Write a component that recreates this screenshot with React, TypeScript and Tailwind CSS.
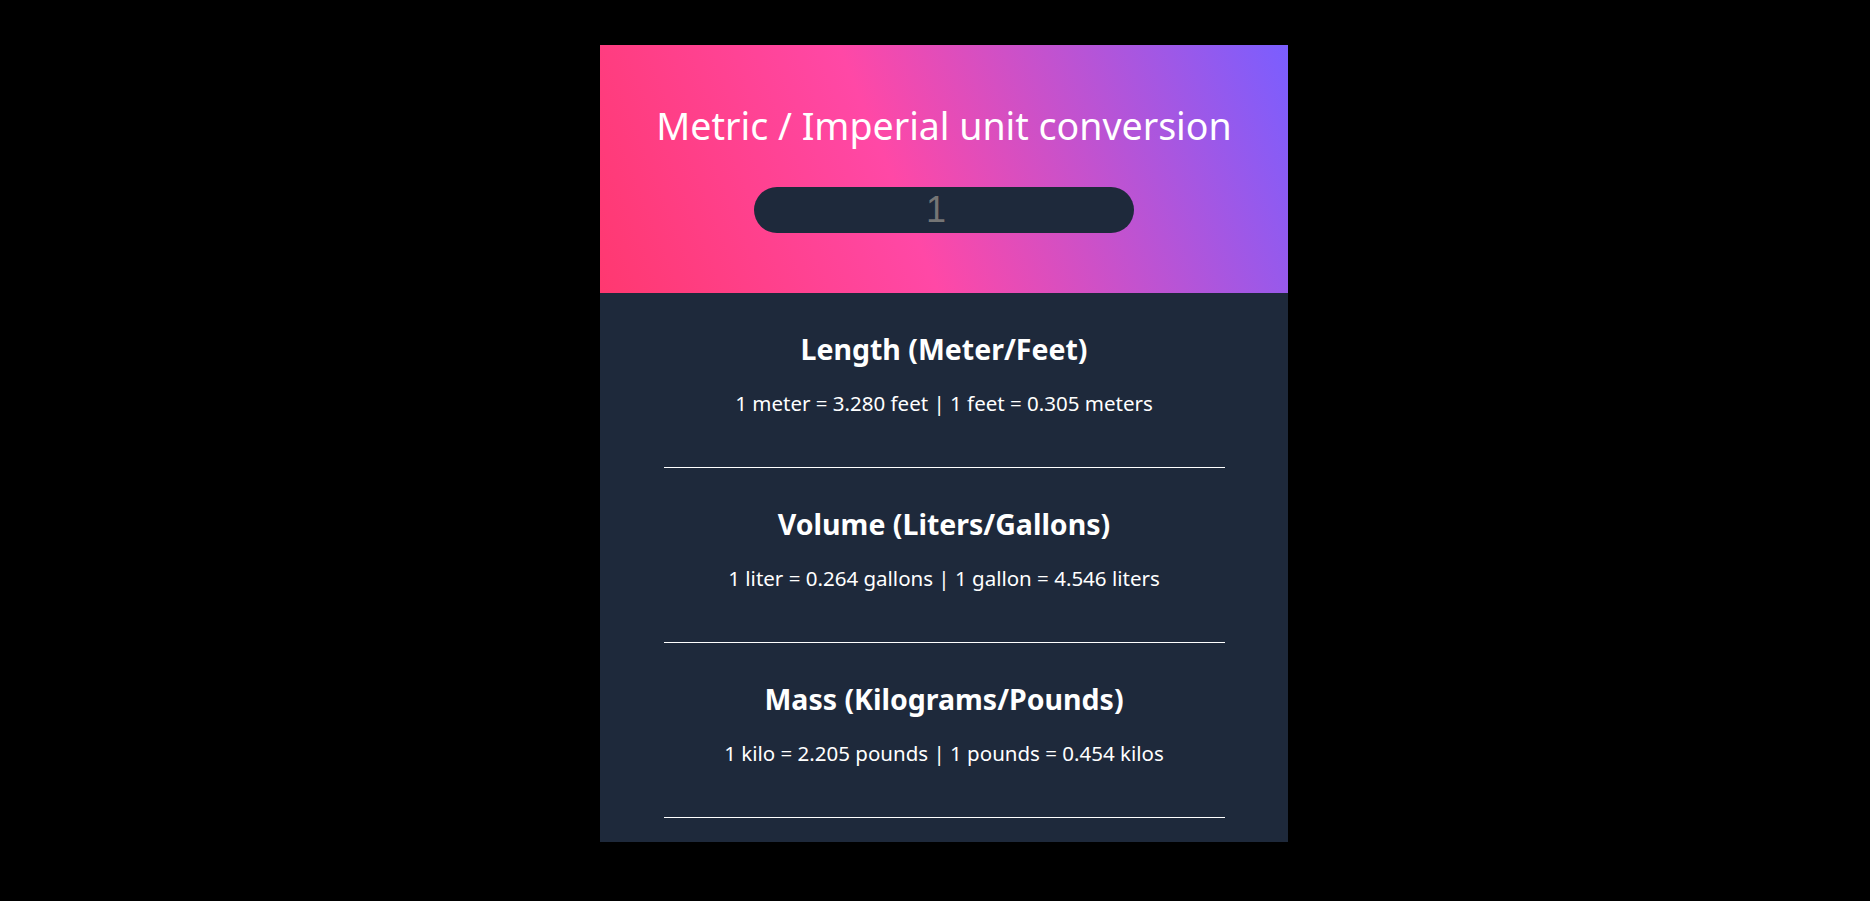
import React from "react";

const sections = [
  { title: "Length (Meter/Feet)", text: "1 meter = 3.280 feet | 1 feet = 0.305 meters" },
  { title: "Volume (Liters/Gallons)", text: "1 liter = 0.264 gallons | 1 gallon = 4.546 liters" },
  { title: "Mass (Kilograms/Pounds)", text: "1 kilo = 2.205 pounds | 1 pounds = 0.454 kilos" },
];

export default function App() {
  return (
    <div className="min-h-screen w-full bg-black flex justify-center pt-[45px] pl-[18px]">
      <div className="w-[688px] flex flex-col">
        <header
          className="h-[248px] flex flex-col items-center bg-[linear-gradient(68deg,#ff3870_0%,#ff48a6_43%,#7a5eff_100%)]"
        >
          <h1 className="mt-[57px] text-[37.5px] leading-[48px] text-white font-['Noto_Sans',sans-serif] font-normal">
            Metric / Imperial unit conversion
          </h1>
          <input
            type="text"
            placeholder="1"
            className="mt-[37px] w-[380px] h-[46px] rounded-full bg-[#1e293b] pr-[16px] text-center text-[36px] leading-[46px] text-white placeholder:text-[#757575] outline-none font-['Liberation_Sans',Arial,sans-serif]"
          />
        </header>
        <main className="bg-[#1e293b] pb-[24px] flex flex-col items-center font-['Noto_Sans',sans-serif] text-white">
          {sections.map((s) => (
            <section key={s.title} className="w-[561px] flex flex-col items-center border-b border-white">
              <h2 className="mt-[38px] text-[28.5px] leading-[36px] font-bold">{s.title}</h2>
              <p className="mt-[21px] text-[20.5px] leading-[30px]">{s.text}</p>
              <div className="h-[49px]" />
            </section>
          ))}
        </main>
      </div>
    </div>
  );
}
